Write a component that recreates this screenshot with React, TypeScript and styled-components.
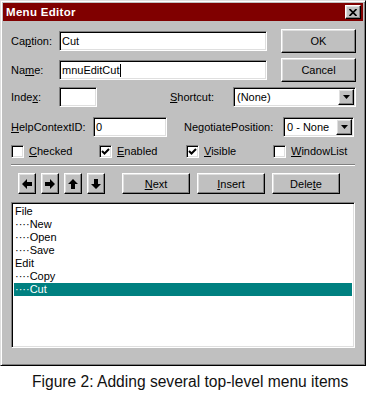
import React from 'react';
import styled, { createGlobalStyle, css } from 'styled-components';

const GlobalStyle = createGlobalStyle`
  html, body { margin: 0; padding: 0; background: #ffffff; }
  body { font-family: "Liberation Sans", Arial, sans-serif; }
  * { box-sizing: border-box; }
`;

const raised = css`
  border-style: solid;
  border-width: 1px;
  border-color: #ffffff #000000 #000000 #ffffff;
  box-shadow: inset -1px -1px 0 #808080, inset 1px 1px 0 #dfdfdf;
  background: #c0c0c0;
`;

const sunken = css`
  border-style: solid;
  border-width: 1px;
  border-color: #808080 #ffffff #ffffff #808080;
  box-shadow: inset 1px 1px 0 #000000, inset -1px -1px 0 #dfdfdf;
  background: #ffffff;
`;

const Page = styled.div`
  width: 366px;
  display: flex;
  flex-direction: column;
`;

const Window = styled.div`
  width: 366px;
  height: 366px;
  background: #c0c0c0;
  border-style: solid;
  border-width: 1px;
  border-color: #dfdfdf #000000 #000000 #dfdfdf;
  box-shadow: inset 1px 1px 0 #ffffff, inset -1px -1px 0 #808080;
  padding: 2px;
  display: flex;
  flex-direction: column;
  font-size: 11px;
  color: #000;
`;

const TitleBar = styled.div`
  height: 18px;
  background: #800000;
  display: flex;
  align-items: center;
  justify-content: space-between;
  padding: 0 2px 0 3px;
`;

const Title = styled.span`
  color: #ffffff;
  font-weight: bold;
  font-size: 11.5px;
  letter-spacing: 0.3px;
`;

const CloseButton = styled.div`
  ${raised};
  width: 16px;
  height: 14px;
  display: flex;
  align-items: center;
  justify-content: center;
`;

const Body = styled.div`
  display: flex;
  flex-direction: column;
  padding: 0 6px 0 8px;
`;

const Row = styled.div<{ $h: number; $mt: number }>`
  display: flex;
  align-items: center;
  height: ${p => p.$h}px;
  margin-top: ${p => p.$mt}px;
`;

const Label = styled.div<{ $w: number; $ml?: number }>`
  width: ${p => p.$w}px;
  margin-left: ${p => p.$ml ?? 0}px;
  flex-shrink: 0;
  white-space: nowrap;
`;

const TextBox = styled.div<{ $w: number }>`
  ${sunken};
  width: ${p => p.$w}px;
  height: 20px;
  flex-shrink: 0;
  display: flex;
  align-items: center;
  padding: 0 2px;
  white-space: nowrap;
`;

const Caret = styled.span`
  display: inline-block;
  width: 1px;
  height: 13px;
  background: #000;
  margin-left: 1px;
`;

const PushButton = styled.div<{ $w: number; $h: number; $ml?: number }>`
  ${raised};
  width: ${p => p.$w}px;
  height: ${p => p.$h}px;
  margin-left: ${p => p.$ml ?? 0}px;
  flex-shrink: 0;
  display: flex;
  align-items: center;
  justify-content: center;
`;

const Combo = styled.div<{ $w: number }>`
  ${sunken};
  width: ${p => p.$w}px;
  height: 20px;
  flex-shrink: 0;
  display: flex;
  align-items: center;
  padding: 1px;
`;

const ComboText = styled.div`
  flex: 1;
  padding-left: 2px;
  white-space: nowrap;
`;

const DropButton = styled.div`
  ${raised};
  width: 16px;
  height: 16px;
  display: flex;
  align-items: center;
  justify-content: center;
`;

const CheckRow = styled.div`
  display: grid;
  grid-template-columns: 88px 87px 87px 1fr;
  align-items: center;
  height: 14px;
  margin-top: 7px;
`;

const CheckItem = styled.div`
  display: flex;
  align-items: center;
  gap: 5px;
`;

const CheckBox = styled.div`
  ${sunken};
  width: 13px;
  height: 13px;
  display: flex;
  align-items: center;
  justify-content: center;
`;

const Separator = styled.div`
  width: 344px;
  margin-top: 6px;
  border-top: 1px solid #808080;
  border-bottom: 1px solid #ffffff;
`;

const ArrowGroup = styled.div`
  display: flex;
  gap: 5px;
  margin-left: 7px;
`;

const ListBox = styled.div`
  ${sunken};
  width: 344px;
  height: 146px;
  margin-top: 8px;
  padding: 2px 2px;
  overflow: hidden;
`;

const ListItem = styled.div<{ $selected?: boolean }>`
  height: 13px;
  line-height: 13px;
  padding-left: 1px;
  white-space: nowrap;
  background: ${p => (p.$selected ? '#008080' : 'transparent')};
  color: ${p => (p.$selected ? '#ffffff' : '#000000')};
`;

const FigureCaption = styled.div`
  font-family: "Liberation Sans", Arial, sans-serif;
  font-size: 15.6px;
  line-height: 18px;
  color: #111;
  padding-left: 32px;
  margin-top: 7px;
  white-space: nowrap;
`;

const DownTriangle = () => (
  <svg width="7" height="4" viewBox="0 0 7 4">
    <polygon points="0,0 7,0 3.5,4" fill="#000" />
  </svg>
);

const CheckMark = () => (
  <svg width="9" height="9" viewBox="0 0 9 9">
    <path d="M1 4 L3.5 6.5 L8 2" stroke="#000" strokeWidth="2" fill="none" />
  </svg>
);

const Arrow = ({ dir }: { dir: 'left' | 'right' | 'up' | 'down' }) => {
  const rot = { left: 0, right: 180, up: 90, down: 270 }[dir];
  return (
    <svg width="10" height="10" viewBox="0 0 10 10">
      <g transform={`rotate(${rot} 5 5)`}>
        <polygon points="0,5 5,0 5,3 10,3 10,7 5,7 5,10" fill="#000" />
      </g>
    </svg>
  );
};

const items: { text: string; sub: boolean }[] = [
  { text: 'File', sub: false },
  { text: 'New', sub: true },
  { text: 'Open', sub: true },
  { text: 'Save', sub: true },
  { text: 'Edit', sub: false },
  { text: 'Copy', sub: true },
  { text: 'Cut', sub: true },
];

export default function App() {
  return (
    <Page>
      <GlobalStyle />
      <Window>
        <TitleBar>
          <Title>Menu Editor</Title>
          <CloseButton>
            <svg width="8" height="7" viewBox="0 0 8 7">
              <path d="M0.5 0 L7.5 7 M7.5 0 L0.5 7" stroke="#000" strokeWidth="1.7" />
            </svg>
          </CloseButton>
        </TitleBar>
        <Body>
          <Row $h={24} $mt={8}>
            <Label $w={48}>Ca<u>p</u>tion:</Label>
            <TextBox $w={208}>Cut</TextBox>
            <PushButton $w={75} $h={24} $ml={14}>OK</PushButton>
          </Row>
          <Row $h={24} $mt={5}>
            <Label $w={48}>Na<u>m</u>e:</Label>
            <TextBox $w={208}>mnuEditCut<Caret /></TextBox>
            <PushButton $w={75} $h={24} $ml={14}>Cancel</PushButton>
          </Row>
          <Row $h={20} $mt={5}>
            <Label $w={48}>Inde<u>x</u>:</Label>
            <TextBox $w={38} />
            <Label $w={63} $ml={73}><u>S</u>hortcut:</Label>
            <Combo $w={123}>
              <ComboText>(None)</ComboText>
              <DropButton><DownTriangle /></DropButton>
            </Combo>
          </Row>
          <Row $h={21} $mt={9}>
            <Label $w={82}><u>H</u>elpContextID:</Label>
            <TextBox $w={74}>0</TextBox>
            <Label $w={99} $ml={17}>Ne<u>g</u>otiatePosition:</Label>
            <Combo $w={71}>
              <ComboText>0 - None</ComboText>
              <DropButton><DownTriangle /></DropButton>
            </Combo>
          </Row>
          <CheckRow>
            <CheckItem><CheckBox /><span><u>C</u>hecked</span></CheckItem>
            <CheckItem><CheckBox><CheckMark /></CheckBox><span><u>E</u>nabled</span></CheckItem>
            <CheckItem><CheckBox><CheckMark /></CheckBox><span><u>V</u>isible</span></CheckItem>
            <CheckItem><CheckBox /><span><u>W</u>indowList</span></CheckItem>
          </CheckRow>
          <Separator />
          <Row $h={21} $mt={7}>
            <ArrowGroup>
              <PushButton $w={18} $h={21}><Arrow dir="left" /></PushButton>
              <PushButton $w={18} $h={21}><Arrow dir="right" /></PushButton>
              <PushButton $w={18} $h={21}><Arrow dir="up" /></PushButton>
              <PushButton $w={18} $h={21}><Arrow dir="down" /></PushButton>
            </ArrowGroup>
            <PushButton $w={68} $h={21} $ml={17}><span><u>N</u>ext</span></PushButton>
            <PushButton $w={68} $h={21} $ml={7}><span><u>I</u>nsert</span></PushButton>
            <PushButton $w={68} $h={21} $ml={7}><span>Dele<u>t</u>e</span></PushButton>
          </Row>
          <ListBox>
            {items.map((it, i) => (
              <ListItem key={i} $selected={i === items.length - 1}>
                {it.sub ? '\u00b7\u00b7\u00b7\u00b7' : ''}{it.text}
              </ListItem>
            ))}
          </ListBox>
        </Body>
      </Window>
      <FigureCaption>Figure 2: Adding several top-level menu items</FigureCaption>
    </Page>
  );
}
